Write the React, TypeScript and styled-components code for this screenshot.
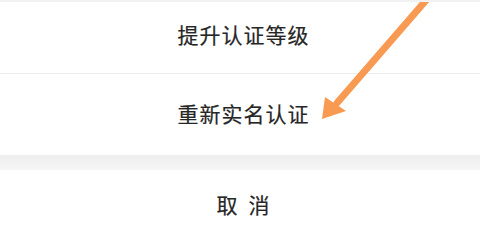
import styled, { createGlobalStyle } from "styled-components";

const Global = createGlobalStyle`
  html, body {
    margin: 0;
    padding: 0;
    background: #ffffff;
  }
  body {
    font-family: "Noto Sans CJK SC", "Noto Sans", sans-serif;
  }
`;

const Sheet = styled.div`
  position: relative;
  width: 480px;
  height: 241px;
  overflow: hidden;
  display: flex;
  flex-direction: column;
  background: #ffffff;
  border-top: 2px solid #f1f1f1;
  box-sizing: border-box;
`;

const Option = styled.div<{ $h: number; $lift: number; $divider?: boolean }>`
  height: ${({ $h }) => $h}px;
  flex-shrink: 0;
  display: flex;
  align-items: center;
  justify-content: center;
  padding: 0 0 ${({ $lift }) => $lift}px 6px;
  box-sizing: border-box;
  font-size: 21px;
  color: #262626;
  -webkit-text-stroke: 0.2px #262626;
  border-bottom: ${({ $divider }) => ($divider ? "1px solid #ececec" : "none")};
`;

const Label = styled.span<{ $spread?: boolean }>`
  letter-spacing: ${({ $spread }) => ($spread ? "11px" : "1px")};
  margin-right: ${({ $spread }) => ($spread ? "-11px" : "-1px")};
`;

const Gap = styled.div`
  height: 15px;
  flex-shrink: 0;
  background: linear-gradient(#eeeeee, #f6f6f6);
`;

const Arrow = styled.svg`
  position: absolute;
  left: 0;
  top: 0;
  pointer-events: none;
`;

export default function App() {
  return (
    <>
      <Global />
      <Sheet>
        <Option $h={72} $lift={8} $divider>
          <Label>提升认证等级</Label>
        </Option>
        <Option $h={81} $lift={3}>
          <Label>重新实名认证</Label>
        </Option>
        <Gap />
        <Option $h={71} $lift={3}>
          <Label $spread>取消</Label>
        </Option>
        <Arrow width="480" height="241" viewBox="0 0 480 241">
          <line
            x1="428"
            y1="-4"
            x2="337"
            y2="101"
            stroke="#f89a52"
            strokeWidth="7"
            strokeLinecap="round"
          />
          <polygon points="322,117 325,95 346,109" fill="#f89a52" />
        </Arrow>
      </Sheet>
    </>
  );
}
